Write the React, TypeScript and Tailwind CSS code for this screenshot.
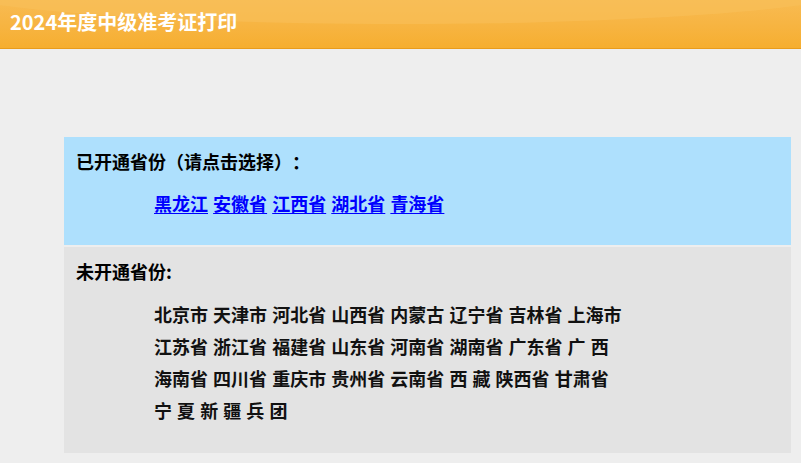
import React from "react";

const font = { fontFamily: '"Noto Sans CJK SC", "Noto Sans", sans-serif' };

export default function App() {
  const openLinks = ["黑龙江", "安徽省", "江西省", "湖北省", "青海省"];
  const rows = [
    "北京市 天津市 河北省 山西省 内蒙古 辽宁省 吉林省 上海市",
    "江苏省 浙江省 福建省 山东省 河南省 湖南省 广东省 广 西",
    "海南省 四川省 重庆市 贵州省 云南省 西 藏 陕西省 甘肃省",
    "宁 夏 新 疆 兵 团",
  ];
  return (
    <div className="min-h-[463px] w-full bg-[#eeeeee] [text-spacing-trim:space-all]" style={font}>
      <div className="relative h-[49px] overflow-hidden border-b border-[#e99c1c] bg-gradient-to-b from-[#f8bb52] to-[#f6ae2f]">
        <div className="absolute left-[-10%] top-[-60px] h-[84px] w-[120%] rounded-[50%] bg-[#f9bf5a] opacity-60" />
        <div className="relative flex h-full items-center pl-[10px] pb-[5px] text-[20px] font-bold text-white">
          2024年度中级准考证打印
        </div>
      </div>
      <div className="ml-[64px] mr-[10px] mt-[88px] flex flex-col gap-[2px]">
        <div className="h-[108px] bg-[#aee0fd] pl-[12px] pt-[8px]">
          <div className="h-[32px] text-[18px] leading-[32px] font-bold text-black">
            已开通省份（请点击选择）：
          </div>
          <div className="mt-[10px] h-[32px] pl-[78px] text-[18px] leading-[32px] font-bold [word-spacing:1px]">
            {openLinks.map((p, i) => (
              <React.Fragment key={p}>
                <a href="#" className="text-[#0000ff] underline underline-offset-2">
                  {p}
                </a>
                {i < openLinks.length - 1 ? " " : ""}
              </React.Fragment>
            ))}
          </div>
        </div>
        <div className="h-[206px] bg-[#e3e3e3] pl-[12px] pt-[8px]">
          <div className="h-[32px] text-[18px] leading-[32px] font-bold text-black">
            未开通省份:
          </div>
          <div className="mt-[11px] pl-[78px] text-[18px] leading-[32px] font-bold text-[#111111] [word-spacing:1px]">
            {rows.map((r) => (
              <div key={r} className="h-[32px] whitespace-pre">
                {r}
              </div>
            ))}
          </div>
        </div>
      </div>
    </div>
  );
}
